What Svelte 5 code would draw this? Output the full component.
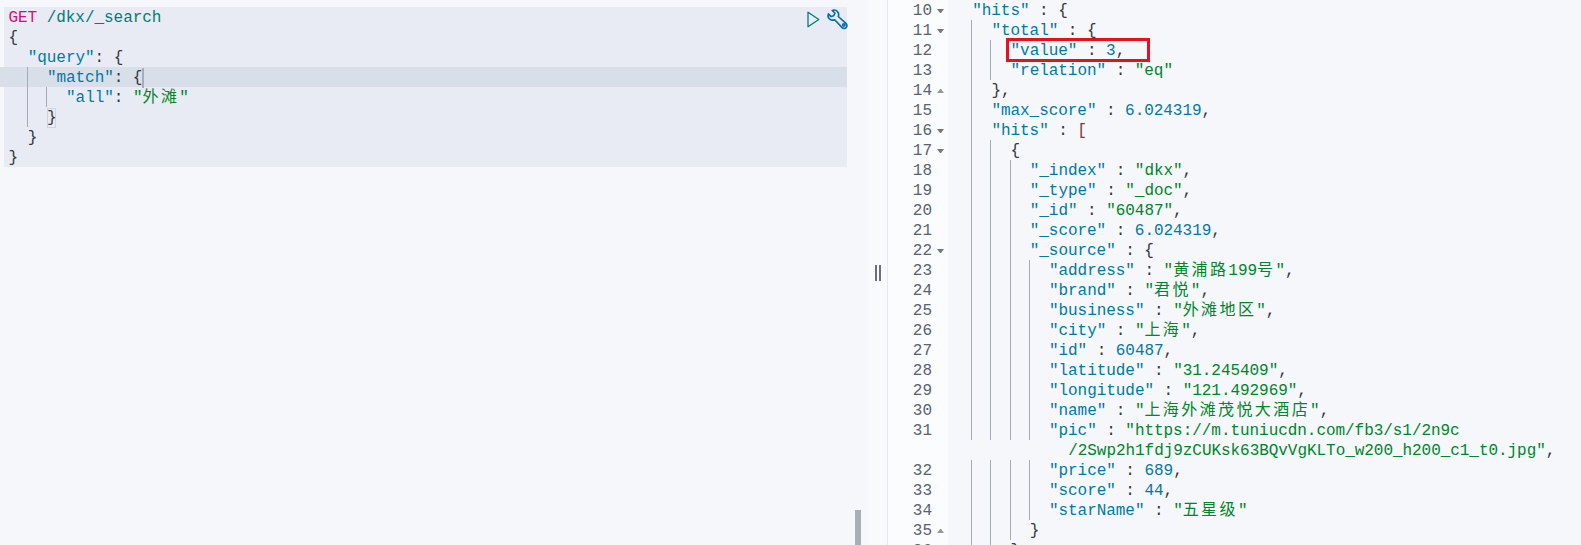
<script lang="ts">
type Tok = [string, string];
interface Row {
	n?: number;
	i: number;
	fold?: "down" | "up";
	guides?: boolean;
	t: Tok[];
}

const key = (k: string): Tok => ["key", `"${k}"`];
const p = (s: string): Tok => ["p", s];
const str = (s: string): Tok => ["str", s];
const cjk = (s: string): Tok => ["cjk", s];
const num = (s: string): Tok => ["num", s];

const request: Row[] = [
	{ i: 0, t: [["method", "GET"], p(" "), ["url", "/dkx/_search"]] },
	{ i: 0, t: [p("{")] },
	{ i: 2, t: [key("query"), p(": {")] },
	{ i: 4, t: [key("match"), p(": "), ["caret", "{"]] },
	{ i: 6, t: [key("all"), p(": "), str('"'), cjk("外滩"), str('"')] },
	{ i: 4, t: [["match", "}"]] },
	{ i: 2, t: [p("}")] },
	{ i: 0, t: [p("}")] },
];

const field = (n: number, k: string, val: Tok[], comma = true, i = 10): Row => ({
	n,
	i,
	t: [key(k), p(" : "), ...val, ...(comma ? [p(",")] : [])],
});

const response: Row[] = [
	{ n: 10, i: 2, fold: "down", t: [key("hits"), p(" : {")] },
	{ n: 11, i: 4, fold: "down", t: [key("total"), p(" : {")] },
	field(12, "value", [num("3")], true, 6),
	field(13, "relation", [str('"eq"')], false, 6),
	{ n: 14, i: 4, fold: "up", t: [p("},")] },
	field(15, "max_score", [num("6.024319")], true, 4),
	{ n: 16, i: 4, fold: "down", t: [key("hits"), p(" : "), ["bracket", "["]] },
	{ n: 17, i: 6, fold: "down", t: [p("{")] },
	field(18, "_index", [str('"dkx"')], true, 8),
	field(19, "_type", [str('"_doc"')], true, 8),
	field(20, "_id", [str('"60487"')], true, 8),
	field(21, "_score", [num("6.024319")], true, 8),
	{ n: 22, i: 8, fold: "down", t: [key("_source"), p(" : {")] },
	field(23, "address", [str('"'), cjk("黄浦路"), str("199"), cjk("号"), str('"')]),
	field(24, "brand", [str('"'), cjk("君悦"), str('"')]),
	field(25, "business", [str('"'), cjk("外滩地区"), str('"')]),
	field(26, "city", [str('"'), cjk("上海"), str('"')]),
	field(27, "id", [num("60487")]),
	field(28, "latitude", [str('"31.245409"')]),
	field(29, "longitude", [str('"121.492969"')]),
	field(30, "name", [str('"'), cjk("上海外滩茂悦大酒店"), str('"')]),
	field(31, "pic", [str('"https://m.tuniucdn.com/fb3/s1/2n9c')], false),
	{ i: 12, guides: false, t: [str('/2Swp2h1fdj9zCUKsk63BQvVgKLTo_w200_h200_c1_t0.jpg"'), p(",")] },
	field(32, "price", [num("689")]),
	field(33, "score", [num("44")]),
	field(34, "starName", [str('"'), cjk("五星级"), str('"')], false),
	{ n: 35, i: 8, fold: "up", t: [p("}")] },
	{ n: 36, i: 6, t: [p("},")] },
];

// indent guides sit on every 2nd column, the innermost level gets none
const guideCount = (r: Row) => (r.guides === false ? 0 : Math.max(0, r.i / 2 - 1));
</script>

{#snippet code(r: Row)}
	<div class="code">
		{#each { length: guideCount(r) } as _}<span class="guide"></span>{/each}
		{#if guideCount(r) * 2 < r.i}<span class="pad" style="width: {(r.i - guideCount(r) * 2) * 9.6}px"></span>{/if}
		<span class="text">{#each r.t as [cls, text]}<span class={cls}>{text}</span>{/each}</span>
	</div>
{/snippet}

<div class="console">
	<section class="left">
		<div class="editor">
			<div class="tools">
				<svg width="13" height="17" viewBox="0 0 13 17" fill="none" stroke="#017d73" stroke-width="1.3"><path d="M1 1.2v14.6L11.8 8.5z" stroke-linejoin="round"/></svg>
				<svg width="21" height="21" viewBox="0 0 21 21" fill="none" stroke="#006bb4" stroke-width="1.6" stroke-linejoin="round"><path d="M5.2 1.4 8 4.2 6.6 6.8 4 7.6 1.4 4.9C.6 7.500 1.600 10 4.200 10.900c1.300.4 2.500.3 3.500-.2l7.200 7.700c1.300 1.300 3.100 1.300 4.200.2 1.200-1.200 1.100-3-.2-4.200l-7.600-6.900c.5-1.200.5-2.700-.2-4C10 1.500 7.500.6 5.200 1.400z"/><circle cx="16.800" cy="16" r="1.200"/></svg>
			</div>
			{#each request as r, idx}
				<div class="row" class:active={idx === 3}>
					{@render code(r)}
				</div>
			{/each}
		</div>
		<div class="thumb"></div>
	</section>

	<div class="resizer"><span></span><span></span></div>

	<section class="right">
		<div class="red-box"></div>
		{#each response as r}
			<div class="row">
				<div class="gutter">
					{#if r.n}<span>{r.n}</span>{/if}
					<i class={r.fold ?? ""}></i>
				</div>
				{@render code(r)}
			</div>
		{/each}
	</section>
</div>

<style>
:global(body) {
	background: #f5f7fa;
}

.console {
	display: flex;
	height: 545px;
	overflow: hidden;
	background: #f5f7fa;
	font-family: "Liberation Mono", "Noto Sans CJK SC", monospace;
	font-size: 16px;
	line-height: 20px;
	color: #343741;
}

.left {
	position: relative;
	width: 868px;
	flex-shrink: 0;
	padding-top: 7px;
	box-sizing: border-box;
}

.editor {
	position: relative;
	width: 843px;
	height: 160px;
	margin-left: 4px;
	padding-left: 4.500px;
	box-sizing: border-box;
	background: #e8ebf3;
}

.tools {
	position: absolute;
	top: 2px;
	right: -1px;
	display: flex;
	align-items: center;
	gap: 7px;
}

.row {
	display: flex;
	height: 20px;
}

.active {
	margin-left: -8.500px;
	padding-left: 8.500px;
	background: #d9dfe8;
}

.code {
	display: flex;
	height: 20px;
	white-space: pre;
}

.guide {
	width: 19.200px;
	flex-shrink: 0;
	box-sizing: border-box;
	border-right: 1px solid #a3abba;
}

.pad {
	flex-shrink: 0;
}

.text {
	padding-top: 1px;
	letter-spacing: -0.050px;
}

.method {
	color: #dd0a73;
}

.url {
	color: #017d73;
}

.key,
.num {
	color: #0079a5;
}

.str,
.cjk {
	color: #00852b;
}

.cjk {
	letter-spacing: 2.400px;
}

.bracket {
	color: #7a3b3b;
}

.caret {
	display: inline-block;
	box-shadow: 2px 0 0 #a7adb8;
}

.match {
	display: inline-block;
	box-shadow: inset 0 0 0 1px #cfd4de;
}

.thumb {
	position: absolute;
	left: 855px;
	top: 510px;
	width: 6px;
	height: 35px;
	background: #a9adb6;
}

.resizer {
	width: 19px;
	flex-shrink: 0;
	display: flex;
	justify-content: center;
	align-items: center;
	gap: 2px;
	background: #f9fafc;
}

.resizer span {
	width: 2px;
	height: 16px;
	background: #6b6f78;
}

.right {
	position: relative;
	flex: 1;
}

.gutter {
	width: 61px;
	height: 20px;
	flex-shrink: 0;
	box-sizing: border-box;
	display: flex;
	justify-content: flex-end;
	align-items: center;
	margin-right: 5px;
	padding: 1px 4px 0 0;
	border-left: 1px solid #e6e9f0;
	background: #fbfcfe;
	color: #5a6270;
}

.gutter i {
	width: 7px;
	height: 0;
	margin-left: 5px;
	box-sizing: border-box;
	border-left: 3.500px solid transparent;
	border-right: 3.500px solid transparent;
}

.gutter i.down {
	border-top: 4px solid #777;
}

.gutter i.up {
	border-bottom: 4px solid #999;
}

.red-box {
	position: absolute;
	left: 119px;
	top: 38px;
	width: 144px;
	height: 24px;
	box-sizing: border-box;
	border: 3px solid #e4121c;
}
</style>
